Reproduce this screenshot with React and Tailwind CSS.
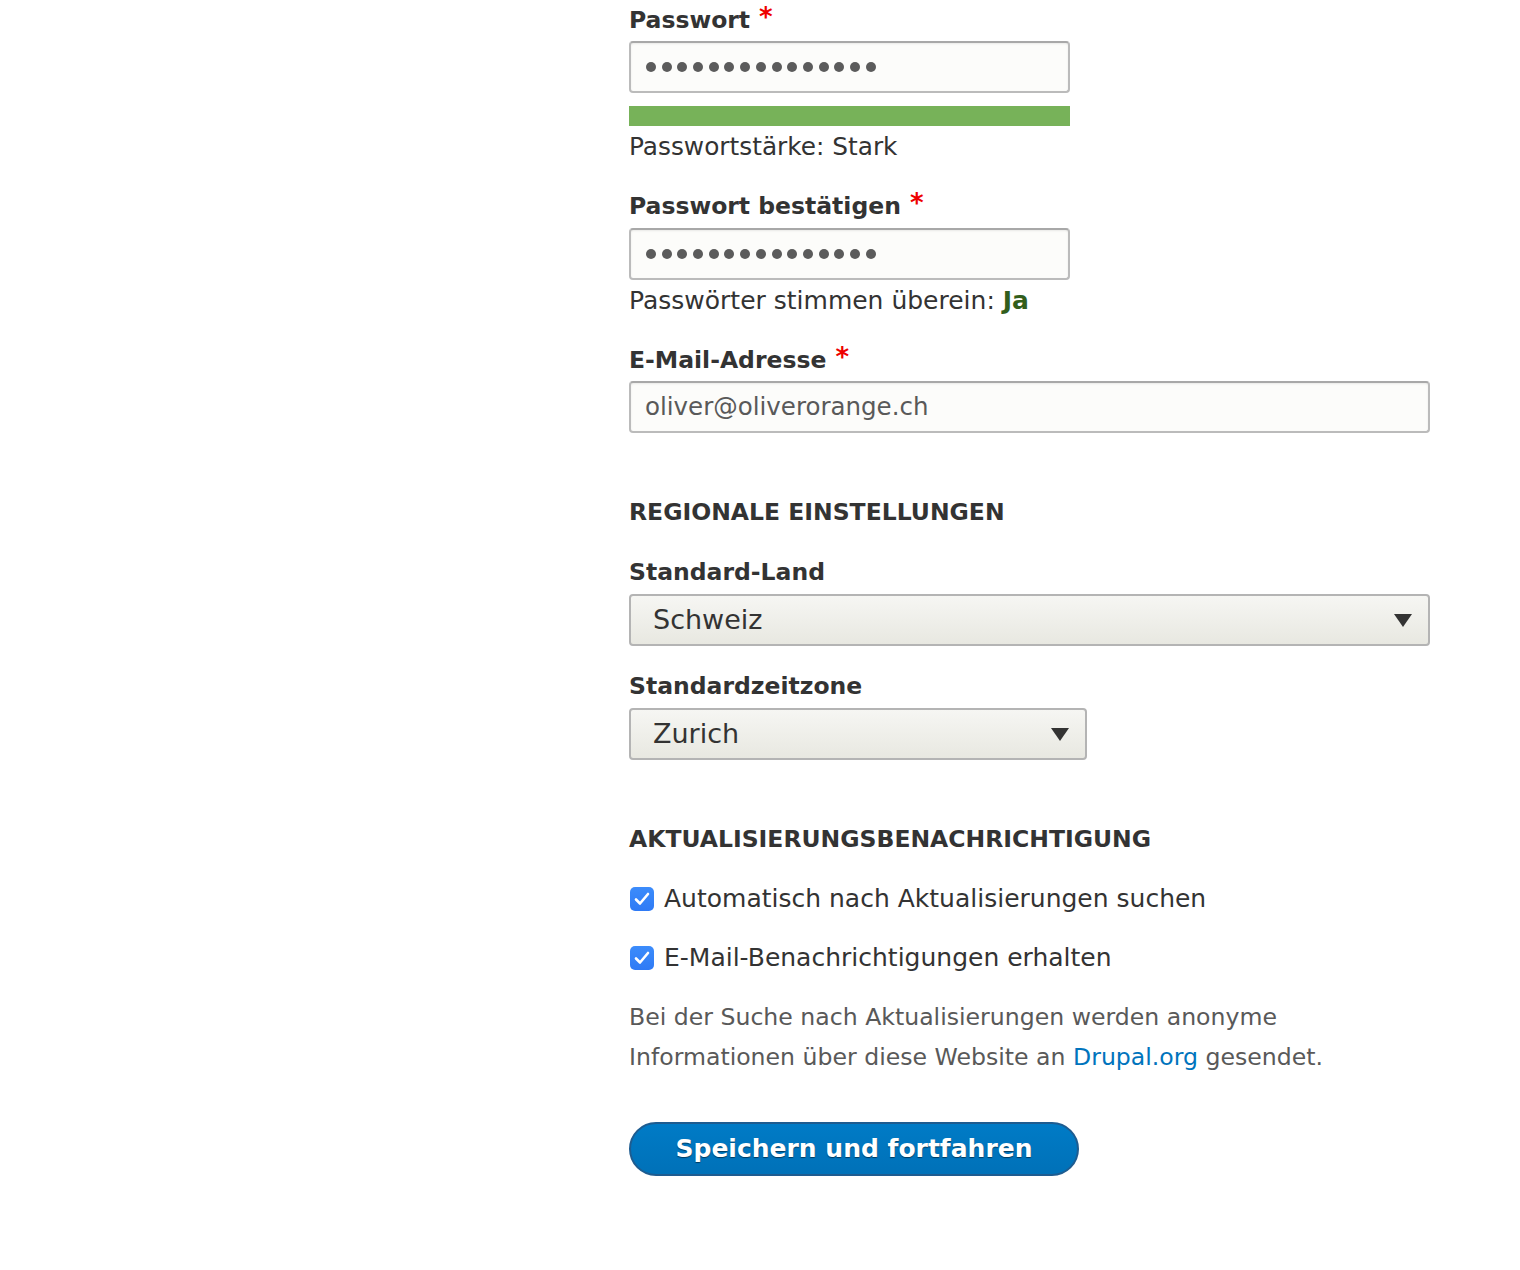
import React from "react";

const font = "font-['DejaVu_Sans',sans-serif]";

function Label({ children, required }) {
  return (
    <div className="text-[23.5px] leading-[36px] font-bold text-[#333]">
      {children}
      {required && (
        <span className="relative top-[-2px] ml-[9px] text-[26px] leading-[0] text-[#e00]">*</span>
      )}
    </div>
  );
}

function PasswordBox() {
  return (
    <div className="flex h-[52px] w-[441px] items-center rounded-[4px] border-2 border-[#bbb] border-t-[#a8a8a8] bg-[#fcfcfa] pl-[15px] shadow-[inset_0_1px_2px_rgba(0,0,0,0.08)]">
      <div className="flex gap-[5.7px]">
        {Array.from({ length: 15 }).map((_, i) => (
          <span key={i} className="block h-[10px] w-[10px] rounded-full bg-[#5b5b5b]" />
        ))}
      </div>
    </div>
  );
}

function SelectBox({ value, width }) {
  return (
    <div
      className={`flex h-[52px] ${width} items-center justify-between rounded-[4px] border-2 border-[#b4b4b4] bg-gradient-to-b from-[#f6f6f3] to-[#e8e8e1] pl-[22px] pr-[16px]`}
    >
      <span className="text-[27px] text-[#333]">{value}</span>
      <svg width="18" height="13" viewBox="0 0 18 13">
        <path d="M0 0 H18 L9 13 Z" fill="#333" />
      </svg>
    </div>
  );
}

function CheckRow({ children }) {
  return (
    <div className="flex items-center gap-[10px] text-[25px] leading-[36px] text-[#333]">
      <span className="ml-[1px] flex h-[24px] w-[24px] shrink-0 items-center justify-center rounded-[5px] bg-gradient-to-b from-[#3c8cfb] to-[#2f7af5]">
        <svg width="16" height="14" viewBox="0 0 16 14">
          <path d="M2 7.5 L6 11.5 L14 2" fill="none" stroke="#fff" strokeWidth="2.6" strokeLinecap="round" strokeLinejoin="round" />
        </svg>
      </span>
      <span>{children}</span>
    </div>
  );
}

export default function App() {
  return (
    <div className={`min-h-[1270px] w-[1520px] bg-white ${font}`}>
      <div className="ml-[629px] w-[801px] pt-[2px]">
        {/* Passwort */}
        <Label required>Passwort</Label>
        <div className="mt-[3px]">
          <PasswordBox />
        </div>
        <div className="mt-[13px] h-[20px] w-[441px] bg-[#77b259]" />
        <div className="mt-[3px] text-[24.8px] leading-[36px] text-[#333]">Passwortstärke: Stark</div>

        {/* Passwort bestätigen */}
        <div className="mt-[23px]">
          <Label required>Passwort bestätigen</Label>
        </div>
        <div className="mt-[4px]">
          <PasswordBox />
        </div>
        <div className="mt-[3px] text-[25px] leading-[36px] text-[#333]">
          Passwörter stimmen überein: <span className="font-bold text-[#325e1c]">Ja</span>
        </div>

        {/* E-Mail */}
        <div className="mt-[23px]">
          <Label required>E-Mail-Adresse</Label>
        </div>
        <div className="mt-[3px] flex h-[52px] w-[801px] items-center rounded-[4px] border-2 border-[#bbb] border-t-[#a8a8a8] bg-[#fcfcfa] pl-[14px] text-[24.5px] text-[#595959] shadow-[inset_0_1px_2px_rgba(0,0,0,0.08)]">
          oliver@oliverorange.ch
        </div>

        {/* Regionale Einstellungen */}
        <div className="mt-[61px] text-[23.5px] leading-[36px] font-bold uppercase text-[#333]">
          Regionale Einstellungen
        </div>
        <div className="mt-[24px]">
          <Label>Standard-Land</Label>
        </div>
        <div className="mt-[4px]">
          <SelectBox value="Schweiz" width="w-[801px]" />
        </div>
        <div className="mt-[22px]">
          <Label>Standardzeitzone</Label>
        </div>
        <div className="mt-[4px]">
          <SelectBox value="Zurich" width="w-[458px]" />
        </div>

        {/* Aktualisierungsbenachrichtigung */}
        <div className="mt-[61px] text-[23.5px] leading-[36px] font-bold uppercase text-[#333]">
          Aktualisierungsbenachrichtigung
        </div>
        <div className="mt-[24px]">
          <CheckRow>Automatisch nach Aktualisierungen suchen</CheckRow>
        </div>
        <div className="mt-[23px]">
          <CheckRow>E-Mail-Benachrichtigungen erhalten</CheckRow>
        </div>
        <p className="mt-[21px] w-[720px] text-[23.6px] leading-[40px] text-[#595959]">
          Bei der Suche nach Aktualisierungen werden anonyme Informationen über diese Website an{" "}
          <a href="#" className="text-[#0074bd]">Drupal.org</a> gesendet.
        </p>

        <button
          type="button"
          className="mt-[45px] flex h-[54px] w-[450px] items-center justify-center rounded-full border-2 border-[#1e5c90] bg-gradient-to-b from-[#007bc6] to-[#0071b8] text-[25px] font-bold text-white [text-shadow:0_1px_1px_rgba(0,0,0,0.5)]"
        >
          Speichern und fortfahren
        </button>
      </div>
    </div>
  );
}
